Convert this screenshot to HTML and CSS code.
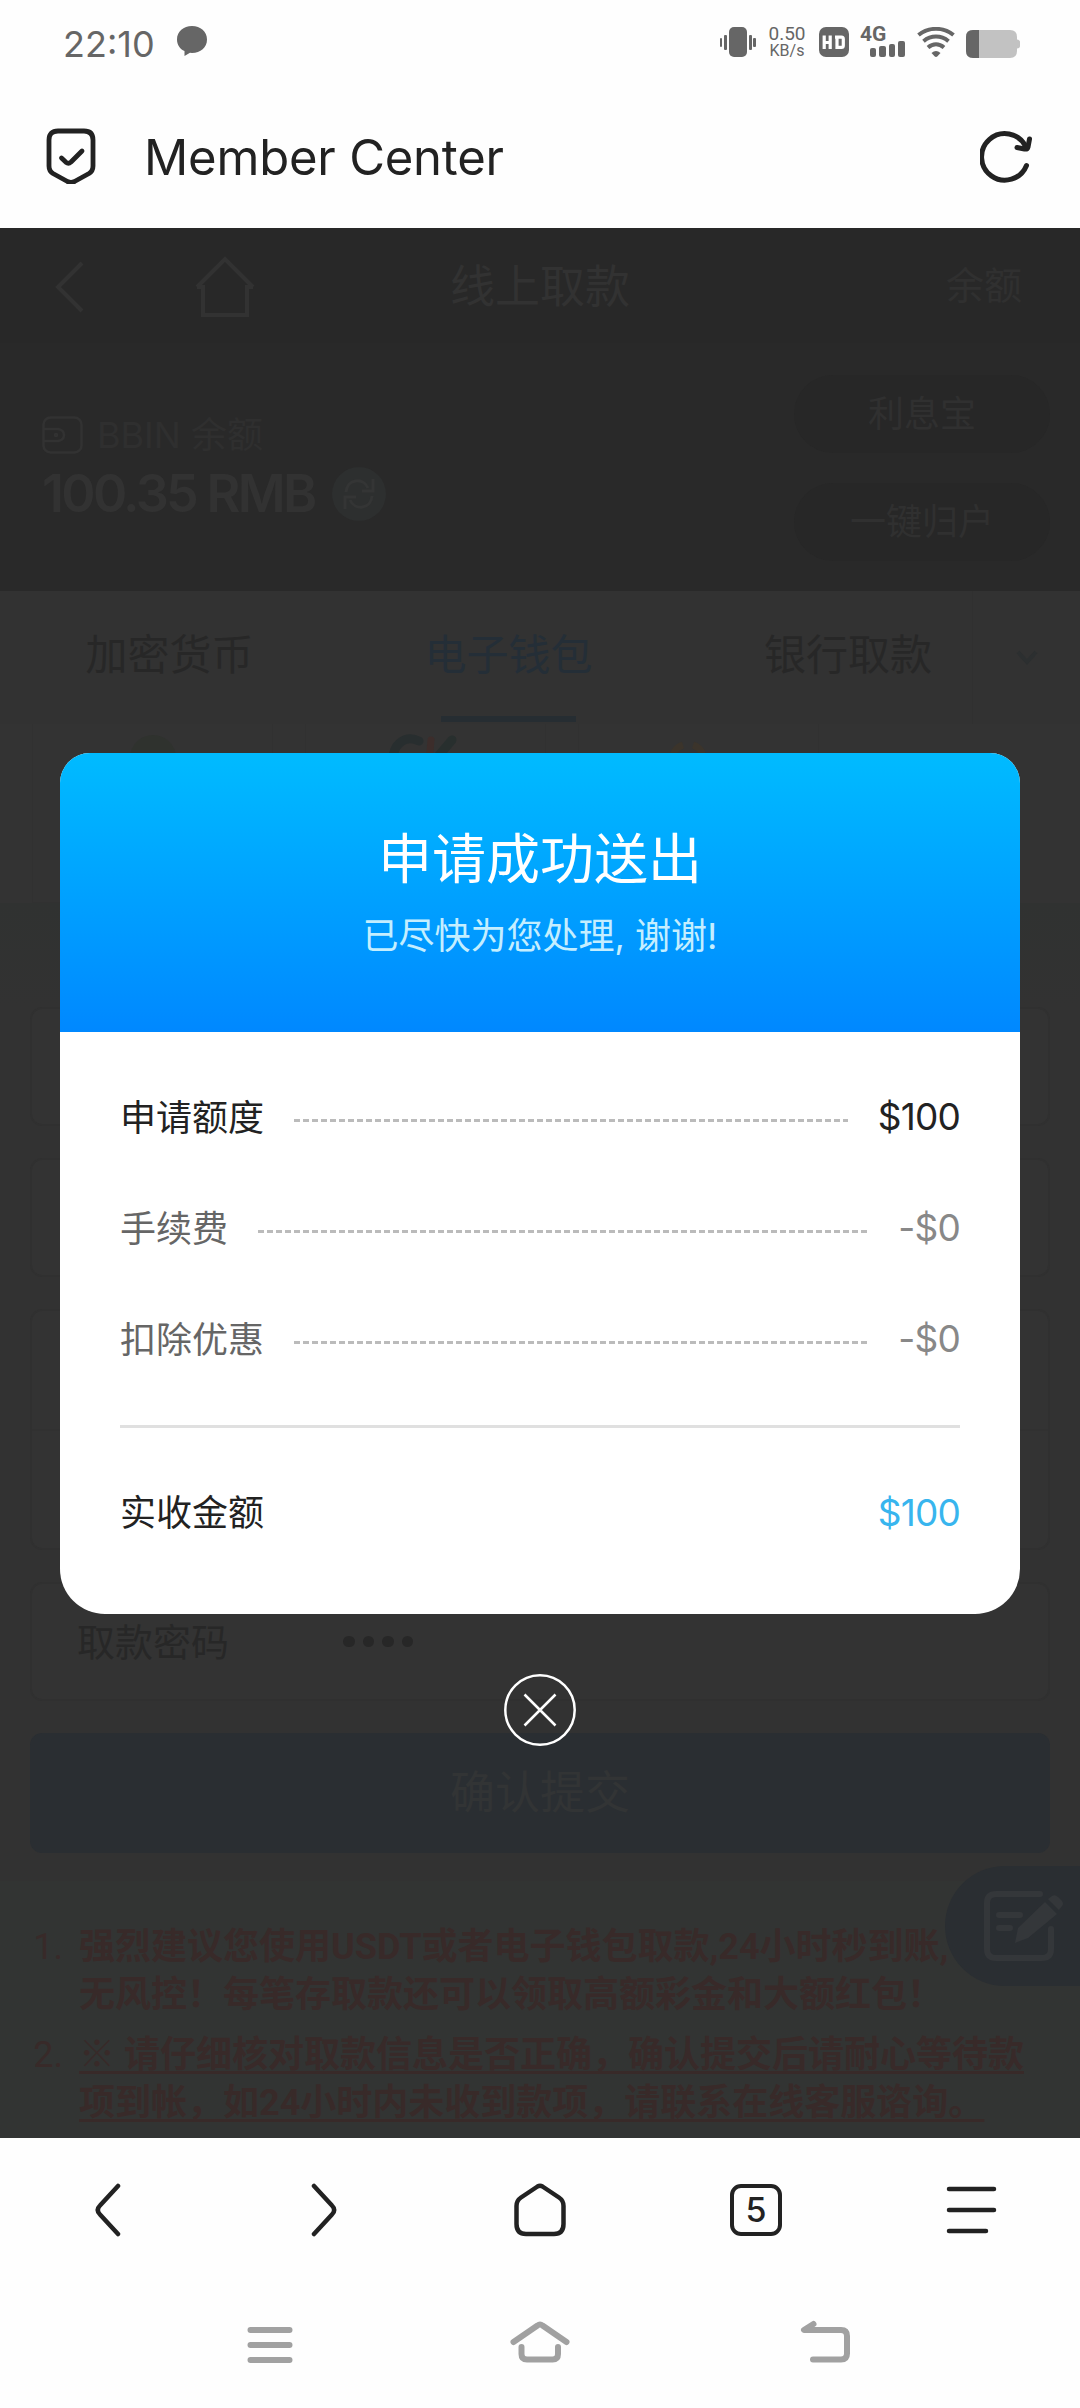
FILE: index.html
```html
<!DOCTYPE html>
<html lang="zh-CN">
<head>
<meta charset="utf-8">
<title>Member Center</title>
<link rel="stylesheet" href="styles.css">
</head>
<body>
<div class="phone">
  <header class="status">
    <span class="clock">22:10</span>
    <svg class="bubble" width="30" height="30" viewBox="0 0 30 30"><path d="M15 0C23.500 0 30 5.500 30 13.500S23.500 27 15 27L13 26.800 7.500 30V25C3 23 0 19 0 13.500 0 5.500 6.500 0 15 0Z" fill="#666"/></svg>
    <div class="status-icons">
      <svg width="36" height="30" viewBox="0 0 36 30" fill="#666"><rect x="9" width="18" height="30" rx="5"/><rect y="11" width="2" height="9" rx="1"/><rect x="4" y="8" width="3" height="15" rx="1"/><rect x="29" y="8" width="3" height="15" rx="1"/><rect x="33" y="11" width="3" height="9" rx="1"/></svg>
      <div class="speed"><span class="rate">0.50</span><span class="unit">KB/s</span></div>
      <svg class="hd" width="30" height="30" viewBox="0 0 30 30"><rect width="30" height="30" rx="7" fill="#666"/><path d="M5.200 8.500V22M11.200 8.500V22M5.200 15.500H11.200M16 10.100H22.500Q24.300 10.100 24.300 12V18.500Q24.300 20.400 22.500 20.400H18V10.100" fill="none" stroke="#fff" stroke-width="3.200"/></svg>
      <div class="cell"><span class="net">4G</span><svg class="bars" width="35" height="16" viewBox="0 0 35 16" fill="#666"><rect y="7" width="6" height="9" rx="2"/><rect x="9" y="5" width="7" height="11" rx="2"/><rect x="19" y="3" width="6" height="13" rx="2"/><rect x="28" width="7" height="16" rx="2"/></svg></div>
      <svg class="wifi" width="38" height="30" viewBox="0 0 38 30"><g fill="none" stroke="#666" stroke-width="4"><path d="M1.500 8C11.500-.2 26.500-.2 36.500 8"/><path d="M6.500 14.200C14 8 24 8 31.500 14.200"/><path d="M11 20.500C16 16.200 22 16.200 27 20.500"/></g><path d="M14.500 26Q19 22 23.500 26L20.500 29.300Q19 30.500 17.500 29.300Z" fill="#666"/></svg>
      <svg class="battery" width="54" height="28" viewBox="0 0 54 28"><path d="M7 0H44Q51 0 51 7V9.500Q54 10 54 12V16Q54 18 51 18.500V21Q51 28 44 28H7Q0 28 0 21V7Q0 0 7 0Z" fill="#c2c2c2"/><path d="M13 0H7Q0 0 0 7V21Q0 28 7 28H13Z" fill="#666"/></svg>
    </div>
  </header>

  <div class="titlebar">
    <svg width="50" height="56" viewBox="0 0 50 56" fill="none" stroke="#222" stroke-width="4.800" stroke-linecap="round" stroke-linejoin="round"><path d="M12 3H38Q47 3 47 12V38Q47 43 43 45.500L28.500 53.500Q25 55.300 21.500 53.500L7 45.500Q3 43 3 38V12Q3 3 12 3Z"/><path d="M15.500 30L20 34.300Q22.500 36.200 25 34L36 23"/></svg>
    <h1 class="site">Member Center</h1>
    <svg width="52" height="54" viewBox="0 0 52 54" fill="none" stroke="#222" stroke-width="5" stroke-linecap="round" stroke-linejoin="round"><path d="M46.500 36.500A23.300 23.300 0 1 1 45.500 17"/><path d="M49.500 10L48 18Q47.300 20.500 44.500 20L37 18.500"/></svg>
  </div>

  <main class="webview">
    <div class="navbar">
      <svg class="nav-back" width="30" height="54" viewBox="0 0 30 54" fill="none" stroke="#323232" stroke-width="4"><path d="M27 3L3 27L27 51"/></svg>
      <svg class="nav-home" width="60" height="62" viewBox="0 0 60 62" fill="none" stroke="#323232" stroke-width="4"><path d="M2 31L30 3L58 31M2 31H8V59H52V31H58"/></svg>
      <span class="nav-title">线上取款</span>
      <span class="nav-right">余额</span>
    </div>

    <section class="hero">
      <div class="balance">
        <div class="bal-label"><svg width="41" height="38" viewBox="0 0 41 38" fill="none" stroke="#323232" stroke-width="2.500"><rect x="1.500" y="1.500" width="38" height="35" rx="7"/><path d="M2 13H16Q22 14 22 19T16 25H2"/><circle cx="14" cy="19" r="1"/></svg>BBIN 余额</div>
        <div class="bal-value"><span class="bal-amount">100.35 RMB</span>
          <svg width="54" height="54" viewBox="0 0 54 54"><circle cx="27" cy="27" r="27" fill="#2d2f2f"/><g fill="none" stroke="#343535" stroke-width="3"><path d="M14 25C15 12 31 10 36 21M41 12V24H30"/><path d="M40 29C39 42 23 44 18 33M13 42V30H24"/></g></svg>
        </div>
      </div>
      <div class="pills"><div class="pill">利息宝</div><div class="pill">一键归户</div></div>
    </section>

    <nav class="tabs">
      <div class="tab">加密货币</div>
      <div class="tab active">电子钱包</div>
      <div class="tab">银行取款</div>
      <div class="more"><svg width="22" height="16" viewBox="0 0 22 16" fill="none" stroke="#2c2f30" stroke-width="4"><path d="M2 2L11 12L20 2"/></svg></div>
    </nav>

    <section class="wallets">
      <div class="wallet"><svg width="48" height="48" viewBox="0 0 48 48"><circle cx="24" cy="24" r="23" fill="#2f322e"/></svg></div>
      <div class="wallet"><svg class="ck" width="72" height="48" viewBox="0 0 72 48" fill="none" stroke-width="9" stroke-linecap="round"><path d="M32 7C18 0 6 11 6 25" stroke="#282e2f"/><path d="M44 6L41 40" stroke="#3c2d2b" stroke-width="7"/><path d="M65 6L48 26" stroke="#282f2e"/></svg></div>
      <div class="wallet"><svg class="ring" width="40" height="48" viewBox="0 0 40 48" fill="none" stroke="#3b342b" stroke-width="7"><path d="M15 7C0 12 0 35 20 35S40 12 25 7"/></svg></div>
    </section>

    <section class="form">
      <div class="field"></div>
      <div class="field"></div>
      <div class="field double"><div class="half"></div></div>
      <div class="field"><span class="field-label">取款密码</span><span class="dots"><i></i><i></i><i></i><i></i></span></div>
      <div class="submit">确认提交</div>
    </section>

    <ol class="notes">
      <li><span class="num">1.</span><b>强烈建议您使用USDT或者电子钱包取款,24小时秒到账,<br>无风控！每笔存取款还可以领取高额彩金和大额红包！</b></li>
      <li><span class="num">2.</span><b class="under">※ 请仔细核对取款信息是否正确，确认提交后请耐心等待款<br>项到帐，如24小时内未收到款项，请联系在线客服谘询。</b></li>
    </ol>

    <div class="float"><svg width="84" height="76" viewBox="0 0 84 76"><g fill="none" stroke="#34373a" stroke-width="6" stroke-linecap="round"><path d="M58 6H14Q5 6 5 15V61Q5 70 14 70H60Q69 70 69 61V41"/><path d="M17 27H38M17 40H28" /></g><path d="M33 55L36 40L63 14L75 26L46 50ZM66 11L70 8Q73 6 76 9L80 13Q82 16 80 18L77 22Z" fill="#34373a"/></svg></div>

    <div class="overlay">
      <div class="modal">
        <div class="modal-head"><h2>申请成功送出</h2><p>已尽快为您处理, 谢谢!</p></div>
        <div class="modal-body">
          <div class="row strong"><span class="label">申请额度</span><i class="leader"></i><span class="amount">$100</span></div>
          <div class="row"><span class="label">手续费</span><i class="leader"></i><span class="amount">-$0</span></div>
          <div class="row"><span class="label">扣除优惠</span><i class="leader"></i><span class="amount">-$0</span></div>
          <div class="row total"><span class="label">实收金额</span><span class="amount">$100</span></div>
        </div>
      </div>
      <svg class="close" width="74" height="74" viewBox="0 0 74 74" fill="none" stroke="#fff" stroke-width="2.500"><circle cx="37" cy="37" r="34.700"/><path d="M21.500 21.500L52.500 52.500M52.500 21.500L21.500 52.500"/></svg>
    </div>
  </main>

  <footer class="toolbar">
    <div><svg width="52" height="54" viewBox="0 0 52 54"><path d="M36 3L18 22.500Q13.500 27 18 31.500L36 51"/></svg></div>
    <div><svg width="52" height="54" viewBox="0 0 52 54"><path d="M16 3L34 22.500Q38.500 27 34 31.500L16 51"/></svg></div>
    <div><svg width="54" height="54" viewBox="0 0 54 54"><path d="M24.500 3.500Q27 2 29.500 3.500L46 14.500Q50.500 17.500 50.500 23V41Q50.500 51 41 51H13Q3.500 51 3.500 41V23Q3.500 17.500 8 14.500Z"/></svg></div>
    <div><span class="tabcount">5</span></div>
    <div><svg width="52" height="54" viewBox="0 0 52 54"><path d="M3 6H48M3 27H48M3 48H40"/></svg></div>
  </footer>
  <div class="sysnav">
    <svg width="60" height="44" viewBox="0 0 60 44" stroke-linecap="round"><path d="M10.500 10H49.500M10.500 25H49.500M10.500 40H49.500"/></svg>
    <svg width="60" height="44" viewBox="0 0 60 44" stroke-linecap="round"><path d="M3.500 22L27.500 5.500Q30 3.500 32.500 5.500L56.500 22" stroke-linejoin="round"/><path d="M11.500 27V34Q11.500 39.500 17 39.500H42.500Q48 39.500 48 34V27"/></svg>
    <svg class="sys-back" width="60" height="44" viewBox="0 0 60 44" stroke-linecap="round" stroke-linejoin="round"><path d="M17.500 4L8 10H45Q51 10 51 16V33.500Q51 39.500 45 39.500H17"/></svg>
  </div>
</div>
</body>
</html>
```
FILE: styles.css
```css
* { box-sizing: border-box; margin: 0; padding: 0; }
body { background: #fefefe; font-family: Inter, "Noto Sans CJK SC", sans-serif; color: #222; }
svg { display: block; flex: none; }
i { font-style: normal; }
.phone { width: 1080px; height: 2408px; display: flex; flex-direction: column; overflow: hidden; }

.status { height: 84px; display: flex; align-items: center; padding: 0 60px 0 63px; }
.clock { width: 114px; font-size: 36px; color: #666; line-height: 40px; padding-top: 4px; white-space: nowrap; }
.bubble { margin-top: -2px; }
.status-icons { margin-left: auto; display: flex; align-items: center; }
.speed { width: 40px; margin-left: 11px; margin-right: 12px; display: flex; flex-direction: column; align-items: center; gap: 3px; color: #666; font-family: Roboto, sans-serif; }
.rate { font-size: 19px; line-height: 14px; }
.unit { font-size: 16px; line-height: 13px; }
.cell { width: 45px; height: 30px; margin-left: 11px; display: flex; flex-direction: column; justify-content: space-between; align-items: flex-end; }
.net { align-self: flex-start; font: 700 21px/15px Roboto, sans-serif; height: 14px; color: #666; }
.wifi { margin-left: 12px; }
.battery { margin-left: 11px; margin-top: 3px; }

.titlebar { height: 144px; display: flex; align-items: center; padding: 0 48px 0 46px; }
.site { flex: 1; margin-left: 48px; font-size: 49px; font-weight: 400; letter-spacing: -.200px; line-height: 60px; padding-top: 4px; }

.webview { position: relative; height: 1910px; overflow: hidden; background: #323433; display: flex; flex-direction: column; color: #323232; }
.navbar { height: 115px; background: #282828; display: grid; grid-template-columns: 170px 200px 340px 1fr; align-items: center; padding-top: 2px; }
.nav-back { margin-left: 55px; }
.nav-home { margin-left: 25px; }
.nav-title { font-size: 45px; line-height: 60px; text-align: center; }
.nav-right { font-size: 38px; line-height: 60px; text-align: right; padding: 0 58px 3px 0; color: #303030; }

.hero { height: 248px; background: #292929; display: flex; justify-content: space-between; padding: 32px 30px 0 42px; }
.balance { padding-top: 36px; }
.bal-label { display: flex; align-items: center; gap: 14px; font-size: 36px; line-height: 48px; color: #2f2f2f; }
.bal-value { display: flex; align-items: center; margin-top: 7px; font-size: 52px; font-weight: 600; line-height: 56px; letter-spacing: -2.700px; }
.bal-amount { width: 290px; white-space: nowrap; }
.pills { width: 256px; display: flex; flex-direction: column; gap: 30px; }
.pill { height: 78px; border-radius: 39px; background: #272727; font-size: 36px; line-height: 78px; text-align: center; color: #303030; }

.tabs { height: 133px; background: #323232; display: grid; grid-template-columns: 339px 339px 294px 1fr; color: #272727; font-size: 42px; line-height: 128px; text-align: center; }
.tab { display: flex; flex-direction: column; align-items: center; white-space: nowrap; }
.tab:nth-child(3) { padding-left: 46px; }
.active { color: #242e37; }
.active::after { content: ""; width: 135px; height: 6px; background: #262d32; margin-top: -3px; }
.more { border-left: 1px solid #303030; display: flex; align-items: center; justify-content: center; }

.wallets { height: 179px; background: #333; display: flex; gap: 32px; padding-left: 32px; }
.wallet { width: 241px; border: 1px solid #313131; border-top: 0; display: flex; justify-content: center; padding-top: 10px; }
.ck { margin-left: -6px; }
.ring { margin: 4px 0 0 -22px; }

.form { height: 978px; background: linear-gradient(#303231 0, #323232 105px); padding: 104px 30px 0; display: flex; flex-direction: column; gap: 32px; }
.field { height: 119px; border: 2px solid #303030; border-radius: 12px; background: #333; display: flex; align-items: center; padding-left: 45px; }
.double { height: 241px; padding: 0; }
.half { flex: 1; height: 2px; background: #313131; }
.field-label { width: 266px; font-size: 38px; padding-bottom: 5px; color: #272727; }
.dots { display: flex; gap: 8px; }
.dots i { width: 11.500px; height: 11.500px; border-radius: 50%; background: #272727; }
.submit { height: 120px; border-radius: 12px; background: #2a2e32; font-size: 45px; line-height: 120px; text-align: center; color: #323435; }

.notes { list-style: none; padding: 42px 0 0 32px; display: flex; flex-direction: column; gap: 12px; color: #382a29; font-size: 36px; line-height: 48px; font-family: Roboto, "Noto Sans CJK SC", sans-serif; }
.notes li { display: flex; white-space: nowrap; }
.num { width: 31px; margin-right: 16px; text-align: right; }
.under { text-decoration: underline; text-decoration-thickness: 3px; text-underline-offset: 4px; }

.float { position: absolute; right: 0; top: 1638px; width: 135px; height: 120px; border-radius: 60px 0 0 60px; background: #2a2e32; display: flex; align-items: center; padding-left: 37px; }

.overlay { position: absolute; inset: 0; padding-top: 525px; display: flex; flex-direction: column; align-items: center; gap: 59px; }
.modal { width: 960px; height: 861px; border-radius: 30px 30px 45px 45px; overflow: hidden; background: #fff; }
.modal-head { height: 279px; background: linear-gradient(#0bf, #08f); color: #fff; text-align: center; padding-top: 67px; }
.modal-head h2 { font-size: 54px; font-weight: 400; line-height: 80px; }
.modal-head p { font-size: 36px; line-height: 54px; margin-top: 9px; color: #c4eeff; }
.modal-body { padding: 30px 60px 0; }
.row { height: 111px; display: flex; align-items: center; gap: 30px; font-size: 36px; color: #666; white-space: nowrap; }
.label { padding-bottom: 6px; }
.strong, .total { color: #222; }
.leader { flex: 1; height: 3px; margin-top: 5px; background: repeating-linear-gradient(90deg, #bbb 0 6px, transparent 6px 9px); }
.amount { font-size: 37px; font-weight: 400; letter-spacing: -.800px; padding-bottom: 3px; color: #888; }
.strong .amount { color: #222; }
.total { height: 172px; margin-top: 30px; border-top: 3px solid #e0e0e0; justify-content: space-between; }
.total .amount { color: #38b5ee; padding-bottom: 0; }

.toolbar { height: 144px; display: grid; grid-template-columns: repeat(5, 216px); justify-items: center; align-items: center; }
.toolbar svg { fill: none; stroke: #222; stroke-width: 4.500; stroke-linecap: round; stroke-linejoin: round; }
.tabcount { display: block; width: 52px; height: 52px; border: 4.500px solid #222; border-radius: 11px; font-size: 34px; font-weight: 500; line-height: 44px; text-align: center; }
.sysnav { height: 126px; display: flex; gap: 210px; padding: 38px 0 0 240px; }
.sysnav svg { fill: none; stroke: #a1a1a1; stroke-width: 6; }
.sys-back { margin-left: 16px; }
```
